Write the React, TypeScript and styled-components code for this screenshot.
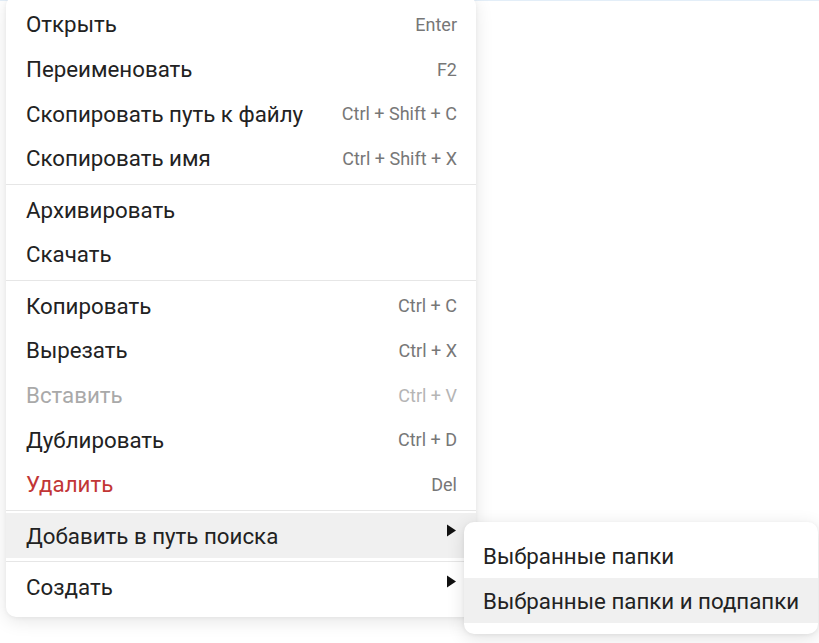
import styled, { createGlobalStyle } from "styled-components";

const GlobalStyle = createGlobalStyle`
  html, body {
    margin: 0;
    padding: 0;
    background: #ffffff;
    overflow: hidden;
  }
  body {
    font-family: Roboto, "Noto Sans", sans-serif;
    -webkit-font-smoothing: antialiased;
  }
`;

const Page = styled.div`
  position: relative;
  width: 819px;
  height: 643px;
  border-top: 1px solid #e3eef8;
  box-sizing: border-box;
`;

const Menu = styled.div`
  position: relative;
  width: 470px;
  margin: -5px 0 0 6px;
  padding: 6px 0 8px;
  background: #ffffff;
  border-radius: 10px;
  box-shadow: 0 4px 18px rgba(0, 0, 0, 0.1), 0 1px 4px rgba(0, 0, 0, 0.05);
`;

interface ItemProps {
  $tone?: "normal" | "disabled" | "danger";
  $active?: boolean;
}

const toneColor = {
  normal: "#222222",
  disabled: "#a9a9a9",
  danger: "#c23636",
};

const Item = styled.div<ItemProps>`
  position: relative;
  display: flex;
  align-items: center;
  justify-content: space-between;
  height: 44.7px;
  padding: 0 19px 0 20px;
  font-size: 22.3px;
  white-space: nowrap;
  color: ${(p) => toneColor[p.$tone || "normal"]};
  background: ${(p) => (p.$active ? "#f0f0f0" : "transparent")};
`;

const Shortcut = styled.span<{ $dim?: boolean }>`
  font-size: 18px;
  color: ${(p) => (p.$dim ? "#b5b5b5" : "#777777")};
`;

const Separator = styled.div`
  height: 1px;
  margin: 3px 0 2.6px;
  background: #e6e6e6;
`;

const Arrow = styled.svg`
  width: 11px;
  height: 13px;
  margin-top: -10px;
`;

const SubMenu = styled.div`
  position: absolute;
  top: 9px;
  left: calc(100% - 12px);
  width: 354px;
  padding: 11px 0 11px;
  background: #ffffff;
  border-radius: 10px;
  box-shadow: 0 4px 18px rgba(0, 0, 0, 0.12), 0 1px 4px rgba(0, 0, 0, 0.06);
  z-index: 2;
`;

const SubItem = styled.div<{ $active?: boolean }>`
  display: flex;
  align-items: center;
  height: 45px;
  padding: 0 19px;
  font-size: 22.3px;
  white-space: nowrap;
  color: #222222;
  background: ${(p) => (p.$active ? "#f0f0f0" : "transparent")};
`;

function SubArrow() {
  return (
    <Arrow viewBox="0 0 11 13">
      <path d="M1 0.5 L10 6.5 L1 12.5 Z" fill="#111111" />
    </Arrow>
  );
}

export default function App() {
  return (
    <>
      <GlobalStyle />
      <Page>
        <Menu>
          <Item>
            Открыть<Shortcut>Enter</Shortcut>
          </Item>
          <Item>
            Переименовать<Shortcut>F2</Shortcut>
          </Item>
          <Item>
            Скопировать путь к файлу<Shortcut>Ctrl + Shift + C</Shortcut>
          </Item>
          <Item>
            Скопировать имя<Shortcut>Ctrl + Shift + X</Shortcut>
          </Item>
          <Separator />
          <Item>Архивировать</Item>
          <Item>Скачать</Item>
          <Separator />
          <Item>
            Копировать<Shortcut>Ctrl + C</Shortcut>
          </Item>
          <Item>
            Вырезать<Shortcut>Ctrl + X</Shortcut>
          </Item>
          <Item $tone="disabled">
            Вставить<Shortcut $dim>Ctrl + V</Shortcut>
          </Item>
          <Item>
            Дублировать<Shortcut>Ctrl + D</Shortcut>
          </Item>
          <Item $tone="danger">
            Удалить<Shortcut>Del</Shortcut>
          </Item>
          <Separator />
          <Item $active>
            Добавить в путь поиска
            <SubArrow />
            <SubMenu>
              <SubItem>Выбранные папки</SubItem>
              <SubItem $active>Выбранные папки и подпапки</SubItem>
            </SubMenu>
          </Item>
          <Separator />
          <Item>
            Создать
            <SubArrow />
          </Item>
        </Menu>
      </Page>
    </>
  );
}
